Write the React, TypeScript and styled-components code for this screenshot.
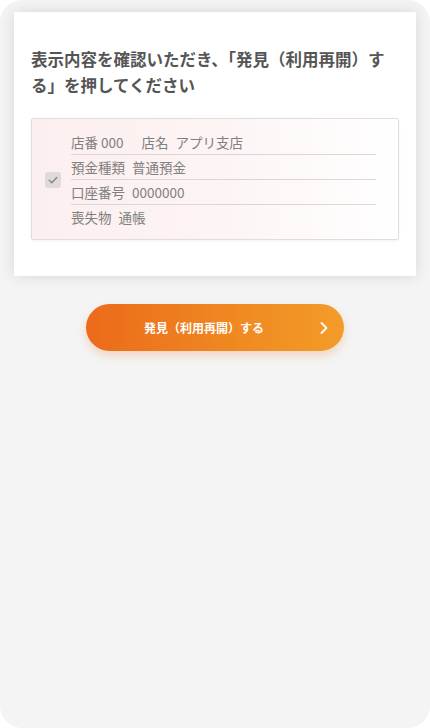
import styled, { createGlobalStyle } from 'styled-components';

const GlobalStyle = createGlobalStyle`
  html, body {
    margin: 0;
    padding: 0;
    background: #ffffff;
  }
  body {
    font-family: "Noto Sans CJK JP", "Noto Sans", sans-serif;
  }
`;

const Frame = styled.div`
  width: 430px;
  height: 728px;
  box-sizing: border-box;
  background: #f4f4f4;
  border-radius: 22px;
  overflow: hidden;
  padding: 12px 14px 0;
  display: flex;
  flex-direction: column;
  align-items: center;
`;

const Card = styled.section`
  width: 402px;
  height: 264px;
  box-sizing: border-box;
  background: #ffffff;
  box-shadow: 0 0 14px rgba(0, 0, 0, 0.12);
  padding: 34px 17px 0 17px;
`;

const Title = styled.h1`
  margin: 0;
  font-size: 16.5px;
  line-height: 26px;
  font-weight: 700;
  color: #555555;
  letter-spacing: 0;
`;

const InfoBox = styled.div`
  margin-top: 20px;
  width: 368px;
  height: 122px;
  box-sizing: border-box;
  border: 1px solid #e2dcdc;
  border-radius: 2px;
  background: linear-gradient(90deg, #fcefef 0%, #fdf4f4 50%, #ffffff 100%);
  box-shadow: 0 1px 3px rgba(0, 0, 0, 0.06);
  display: flex;
  align-items: center;
  padding: 0 22px 0 13px;
`;

const Check = styled.span`
  width: 16px;
  height: 16px;
  border-radius: 3px;
  background: #e0dbdb;
  display: flex;
  align-items: center;
  justify-content: center;
  flex-shrink: 0;
  margin-top: 1px;
`;

const Rows = styled.div`
  flex: 1;
  margin-left: 10px;
  display: flex;
  flex-direction: column;
`;

const Row = styled.div<{ $last?: boolean }>`
  height: 24px;
  display: flex;
  align-items: center;
  gap: 7px;
  font-size: 13.5px;
  color: #808080;
  border-bottom: ${(p) => (p.$last ? 'none' : '1px solid #dcd6d6')};
`;

const Value = styled.span<{ $gap?: number }>`
  margin-left: ${(p) => p.$gap ?? 0}px;
`;

const Button = styled.button`
  margin-top: 28px;
  width: 258px;
  height: 47px;
  border: none;
  border-radius: 24px;
  background: linear-gradient(90deg, #ec6a1a 0%, #f08a22 60%, #f39c28 100%);
  box-shadow: 0 5px 10px rgba(236, 110, 30, 0.22);
  color: #ffffff;
  font-family: "Noto Sans CJK JP", sans-serif;
  font-size: 12px;
  font-weight: 700;
  display: flex;
  align-items: center;
  padding: 0 15px 0 0;
`;

const Label = styled.span`
  flex: 1;
  text-align: center;
  margin-right: -3px;
`;

const Chevron = styled.svg`
  flex-shrink: 0;
`;

export default function App() {
  return (
    <>
      <GlobalStyle />
      <Frame>
        <Card>
          <Title>表示内容を確認いただき、「発見（利用再開）する」を押してください</Title>
          <InfoBox>
            <Check>
              <svg width="12" height="12" viewBox="0 0 12 12">
                <path d="M2.2 6.3 L4.8 8.8 L9.8 3.4" fill="none" stroke="#8a8585" strokeWidth="1.4" strokeLinecap="round" strokeLinejoin="round" />
              </svg>
            </Check>
            <Rows>
              <Row>
                <span>店番</span>
                <Value $gap={-4}>000</Value>
                <Value $gap={11}>店名</Value>
                <span>アプリ支店</span>
              </Row>
              <Row>
                <span>預金種類</span>
                <span>普通預金</span>
              </Row>
              <Row>
                <span>口座番号</span>
                <span>0000000</span>
              </Row>
              <Row $last>
                <span>喪失物</span>
                <span>通帳</span>
              </Row>
            </Rows>
          </InfoBox>
        </Card>
        <Button>
          <Label>発見（利用再開）する</Label>
          <Chevron width="10" height="14" viewBox="0 0 10 14">
            <path d="M2.5 2 L7.5 7 L2.5 12" fill="none" stroke="#ffffff" strokeWidth="1.8" strokeLinecap="round" strokeLinejoin="round" />
          </Chevron>
        </Button>
      </Frame>
    </>
  );
}
